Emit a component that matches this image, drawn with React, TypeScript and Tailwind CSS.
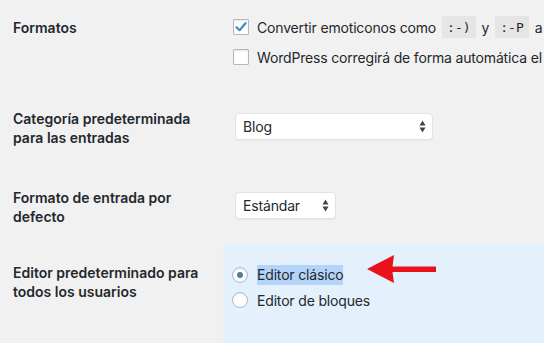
import React from "react";

const font = "font-['Inter','Liberation_Sans',sans-serif]";

function Checkbox({ checked }: { checked?: boolean }) {
  return (
    <span className="relative inline-flex h-[16px] w-[16px] shrink-0 items-center justify-center rounded-[1px] border border-[#b4b9be] bg-white shadow-[inset_0_1px_2px_rgba(0,0,0,0.1)]">
      {checked && (
        <svg width="14" height="14" viewBox="0 0 14 14">
          <path d="M2.5 7.2 L5.6 10.2 L11.5 3.2" fill="none" stroke="#3c8fb6" strokeWidth="2.2" strokeLinecap="round" strokeLinejoin="round" />
        </svg>
      )}
    </span>
  );
}

function Radio({ checked }: { checked?: boolean }) {
  return (
    <span className="inline-flex h-[16px] w-[16px] shrink-0 items-center justify-center rounded-full border border-[#b4b9be] bg-white shadow-[inset_0_1px_2px_rgba(0,0,0,0.1)]">
      {checked && <span className="h-[6px] w-[6px] rounded-full bg-[#4d7f97]" />}
    </span>
  );
}

function SelectArrows() {
  return (
    <svg width="7" height="13" viewBox="0 0 7 13" className="shrink-0">
      <path d="M3.5 0.5 L6.5 5.5 L0.5 5.5 Z" fill="#444" />
      <path d="M3.5 12.5 L6.5 7.5 L0.5 7.5 Z" fill="#444" />
    </svg>
  );
}

function Select({ value, width }: { value: string; width: string }) {
  return (
    <div className={`ml-[2px] flex h-[27px] items-center justify-between rounded-[4px] border border-[#e2e2e2] bg-white pl-[7px] pr-[6px] text-[14px] text-[#23282d] shadow-[0_1px_1px_rgba(0,0,0,0.04)] ${width}`}>
      <span>{value}</span>
      <SelectArrows />
    </div>
  );
}

function Code({ children }: { children: React.ReactNode }) {
  return (
    <code className="mx-[6px] inline-flex h-[22px] items-center rounded-[1px] bg-[#e5e5e5] px-[5px] font-['DejaVu_Sans_Mono','Liberation_Mono',monospace] text-[13px] tracking-normal text-[#23282d]">
      {children}
    </code>
  );
}

export default function App() {
  return (
    <div className={`h-[343px] w-[544px] overflow-hidden bg-[#f1f1f1] text-[14px] leading-[19px] text-[#23282d] ${font}`}>
      {/* Row 1 */}
      <div className="flex h-[89px]">
        <div className="w-[223px] shrink-0 pl-[13px] pt-[18px] font-semibold">Formatos</div>
        <div className="flex flex-col gap-[8px] whitespace-nowrap pl-[10px] pt-[16px] tracking-[-0.17px]">
          <div className="flex h-[22px] items-center gap-[8px]">
            <Checkbox checked />
            <span className="flex items-center">
              Convertir emoticonos como<Code>:-)</Code>y<Code>:-P</Code>a gráficos
            </span>
          </div>
          <div className="flex h-[22px] items-center gap-[8px]">
            <Checkbox />
            <span>WordPress corregirá de forma automática el XHTML</span>
          </div>
        </div>
      </div>
      {/* Row 2 */}
      <div className="flex h-[79px]">
        <div className="w-[223px] shrink-0 pl-[13px] pt-[20px] font-semibold">
          Categoría predeterminada
          <br />
          para las entradas
        </div>
        <div className="pl-[10px] pt-[24px] tracking-[-0.17px]">
          <Select value="Blog" width="w-[198px]" />
        </div>
      </div>
      {/* Row 3 */}
      <div className="flex h-[75px]">
        <div className="w-[223px] shrink-0 pl-[13px] pt-[20px] font-semibold">
          Formato de entrada por
          <br />
          defecto
        </div>
        <div className="pl-[10px] pt-[24px] tracking-[-0.17px]">
          <Select value="Estándar" width="w-[101px]" />
        </div>
      </div>
      {/* Row 4 */}
      <div className="flex h-[100px]">
        <div className="w-[223px] shrink-0 pl-[13px] pt-[20px] font-semibold">
          Editor predeterminado para
          <br />
          todos los usuarios
        </div>
        <div className="relative flex-1 bg-[#e4f0fb] pl-[9px] pt-[22px] tracking-[-0.17px]">
          <div className="flex flex-col gap-[5px]">
            <div className="flex h-[20px] items-center gap-[9px]">
              <Radio checked />
              <span className="bg-[#b4d3f8] leading-[20px]">Editor clásico</span>
            </div>
            <div className="flex h-[20px] items-center gap-[9px]">
              <Radio />
              <span>Editor de bloques</span>
            </div>
          </div>
          <svg
            className="absolute left-[144px] top-[12px]"
            width="69"
            height="28"
            viewBox="0 0 69 28"
          >
            <polygon points="0,14 27,0 25.5,11.5 69,11.5 69,17 25.5,17 27,28" fill="#e8121a" />
          </svg>
        </div>
      </div>
    </div>
  );
}
